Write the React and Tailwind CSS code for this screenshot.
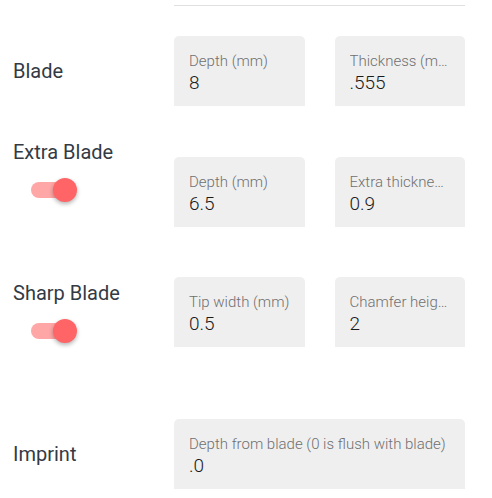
import React from 'react';

function Field({ label, value, className = '' }) {
  return (
    <div className={`h-[70px] bg-[#efefef] rounded-t-[5px] px-[15px] pt-4 min-w-0 ${className}`}>
      <div className="text-[15px] leading-[18px] font-light text-[#707070] truncate">{label}</div>
      <div className="text-[19px] leading-[24px] font-light text-[#1a1a1a] mt-px">{value}</div>
    </div>
  );
}

function Toggle() {
  return (
    <div className="relative w-[48px] h-6 ml-[18px] mt-[14px] flex items-center">
      <div className="w-[44px] h-4 rounded-full bg-[#ffa6a6]" />
      <div className="absolute left-[22px] top-0 w-6 h-6 rounded-full bg-[#ff6466] shadow-[0_2px_4px_rgba(0,0,0,0.3)]" />
    </div>
  );
}

export default function App() {
  return (
    <div className="w-[492px] h-[498px] bg-white font-['Roboto',sans-serif] overflow-hidden">
      <div className="ml-[174px] mr-[27px] mt-[5px] h-px bg-[#e0e0e0]" />

      <div className="flex items-center mt-[30px]">
        <div className="w-[174px] pl-[13px] text-[20px] leading-6 text-[#343a44]">Blade</div>
        <div className="grid grid-cols-2 gap-[30px] w-[291px]">
          <Field label="Depth (mm)" value="8" />
          <Field label="Thickness (mm)" value=".555" />
        </div>
      </div>

      <div className="flex items-start mt-[34px]">
        <div className="w-[174px] pl-[13px]">
          <div className="text-[20px] leading-6 text-[#343a44]">Extra Blade</div>
          <Toggle />
        </div>
        <div className="grid grid-cols-2 gap-[30px] w-[291px] mt-[17px]">
          <Field label="Depth (mm)" value="6.5" />
          <Field label="Extra thickness (mm)" value="0.9" />
        </div>
      </div>

      <div className="flex items-start mt-[50px]">
        <div className="w-[174px] pl-[13px] pt-1">
          <div className="text-[20px] leading-6 text-[#343a44]">Sharp Blade</div>
          <Toggle />
        </div>
        <div className="grid grid-cols-2 gap-[30px] w-[291px]">
          <Field label="Tip width (mm)" value="0.5" />
          <Field label="Chamfer height (mm)" value="2" />
        </div>
      </div>

      <div className="flex items-center mt-[72px]">
        <div className="w-[174px] pl-[13px] text-[20px] leading-6 text-[#343a44]">Imprint</div>
        <Field className="w-[291px]" label="Depth from blade (0 is flush with blade)" value=".0" />
      </div>
    </div>
  );
}
